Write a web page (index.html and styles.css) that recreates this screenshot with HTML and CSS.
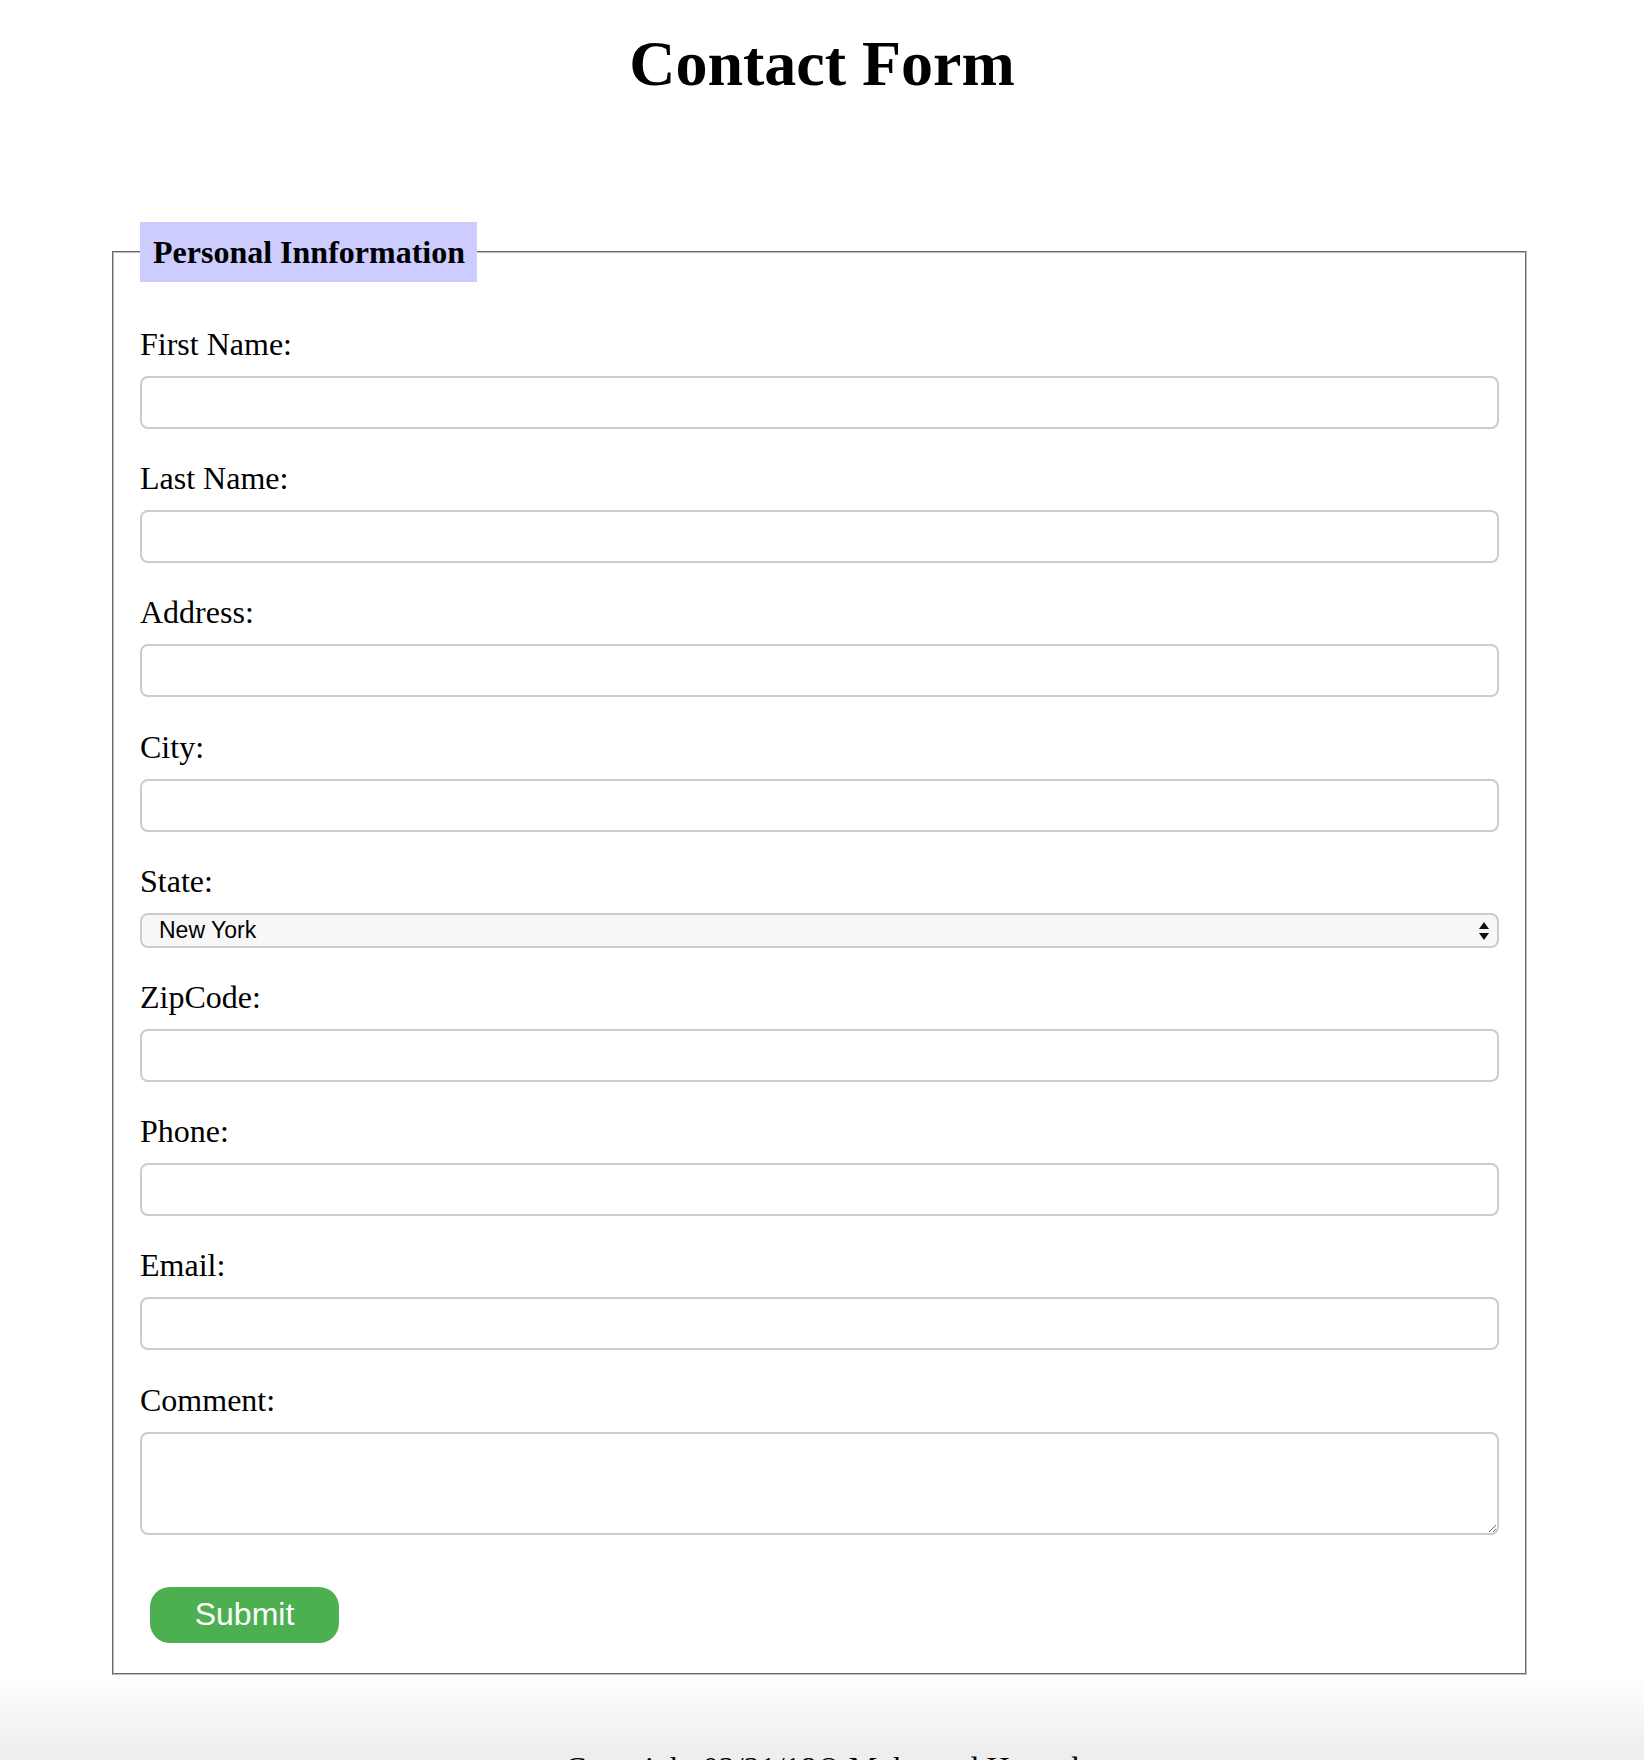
FILE: index.html
```html
<!DOCTYPE html>
<html lang="en">
<head>
<meta charset="utf-8">
<title>Contact Form</title>
<link rel="stylesheet" href="styles.css">
</head>
<body>
<h1 class="title">Contact Form</h1>
<form class="contact-form">
  <fieldset class="panel">
    <legend class="panel-legend">Personal Innformation</legend>
    <div class="fields">
      <div class="field">
        <label class="field-label" for="fname">First Name:</label>
        <input class="field-input" type="text" id="fname">
      </div>
      <div class="field">
        <label class="field-label" for="lname">Last Name:</label>
        <input class="field-input" type="text" id="lname">
      </div>
      <div class="field">
        <label class="field-label" for="address">Address:</label>
        <input class="field-input" type="text" id="address">
      </div>
      <div class="field">
        <label class="field-label" for="city">City:</label>
        <input class="field-input" type="text" id="city">
      </div>
      <div class="field">
        <label class="field-label" for="state">State:</label>
        <div class="select-wrap">
          <select class="field-select" id="state">
            <option>New York</option>
            <option>California</option>
            <option>Texas</option>
          </select>
          <svg class="select-arrows" width="12" height="20" viewBox="0 0 12 20" aria-hidden="true">
            <path d="M1 8 L6 1 L11 8 Z" fill="#111"/>
            <path d="M1 12 L6 19 L11 12 Z" fill="#111"/>
          </svg>
        </div>
      </div>
      <div class="field">
        <label class="field-label" for="zip">ZipCode:</label>
        <input class="field-input" type="text" id="zip">
      </div>
      <div class="field">
        <label class="field-label" for="phone">Phone:</label>
        <input class="field-input" type="text" id="phone">
      </div>
      <div class="field">
        <label class="field-label" for="email">Email:</label>
        <input class="field-input" type="text" id="email">
      </div>
      <div class="field">
        <label class="field-label" for="comment">Comment:</label>
        <textarea class="field-textarea" id="comment"></textarea>
      </div>
    </div>
    <button class="submit-btn" type="button">Submit</button>
  </fieldset>
</form>
<footer class="page-footer">
  <p class="footer-text">Copyright 02/21/18&copy; Mohamed Hamed</p>
</footer>
</body>
</html>
```

FILE: styles.css
```css
html, body {
  margin: 0;
  padding: 0;
  background: #ffffff;
}

body {
  font-family: "Liberation Serif", "Times New Roman", serif;
  color: #000;
  overflow: hidden;
}

.title {
  margin: 28px 0 0;
  font-size: 64px;
  line-height: 72px;
  font-weight: bold;
  text-align: center;
}

.contact-form {
  margin: 0;
}

.panel {
  box-sizing: border-box;
  width: 1415px;
  margin: 122px 0 0 112px;
  padding: 44px 26px 30px;
  border: 2px groove #bdbdbd;
  min-width: 0;
}

.panel-legend {
  background: #ccccff;
  font-size: 32px;
  font-weight: bold;
  line-height: 36px;
  padding: 12px 12px 12px 13px;
}

.fields {
  display: flex;
  flex-direction: column;
  gap: 31.2px;
}

.field {
  display: flex;
  flex-direction: column;
}

.field-label {
  font-size: 32px;
  line-height: 37px;
  margin-bottom: 13px;
}

.field-input {
  box-sizing: border-box;
  width: 100%;
  height: 53px;
  margin: 0;
  border: 2px solid #cccccc;
  border-radius: 8px;
  background: #fff;
  padding: 0 16px;
  font-size: 22px;
  font-family: "Liberation Sans", Arial, sans-serif;
}

.select-wrap {
  position: relative;
}

.field-select {
  box-sizing: border-box;
  width: 100%;
  height: 35px;
  margin: 0;
  -webkit-appearance: none;
  appearance: none;
  border: 2px solid #cccccc;
  border-radius: 8px;
  background: #f7f7f7;
  padding: 0 15px 0 17px;
  font-size: 23px;
  font-family: "Liberation Sans", Arial, sans-serif;
  color: #000;
}

.select-arrows {
  position: absolute;
  right: 9px;
  top: 8px;
  pointer-events: none;
}

.field-textarea {
  box-sizing: border-box;
  width: 100%;
  height: 103px;
  margin: 0;
  border: 2px solid #cccccc;
  border-radius: 8px;
  padding: 8px 16px;
  font-size: 22px;
  font-family: "Liberation Sans", Arial, sans-serif;
  resize: both;
}

.submit-btn {
  display: block;
  margin: 52px 0 0 10px;
  width: 189px;
  height: 56px;
  border: none;
  border-radius: 20px;
  background: #4caf50;
  color: #ffffff;
  font-family: "Liberation Sans", Arial, sans-serif;
  font-size: 32px;
  padding: 0;
  cursor: pointer;
}

.page-footer {
  margin-top: 2px;
  padding: 73px 0 40px;
  background: linear-gradient(to bottom, #ffffff 0px, #eeeeee 72px, #eeeeee 100%);
}

.footer-text {
  margin: 0;
  font-size: 32px;
  line-height: 37px;
  text-align: center;
}
```
